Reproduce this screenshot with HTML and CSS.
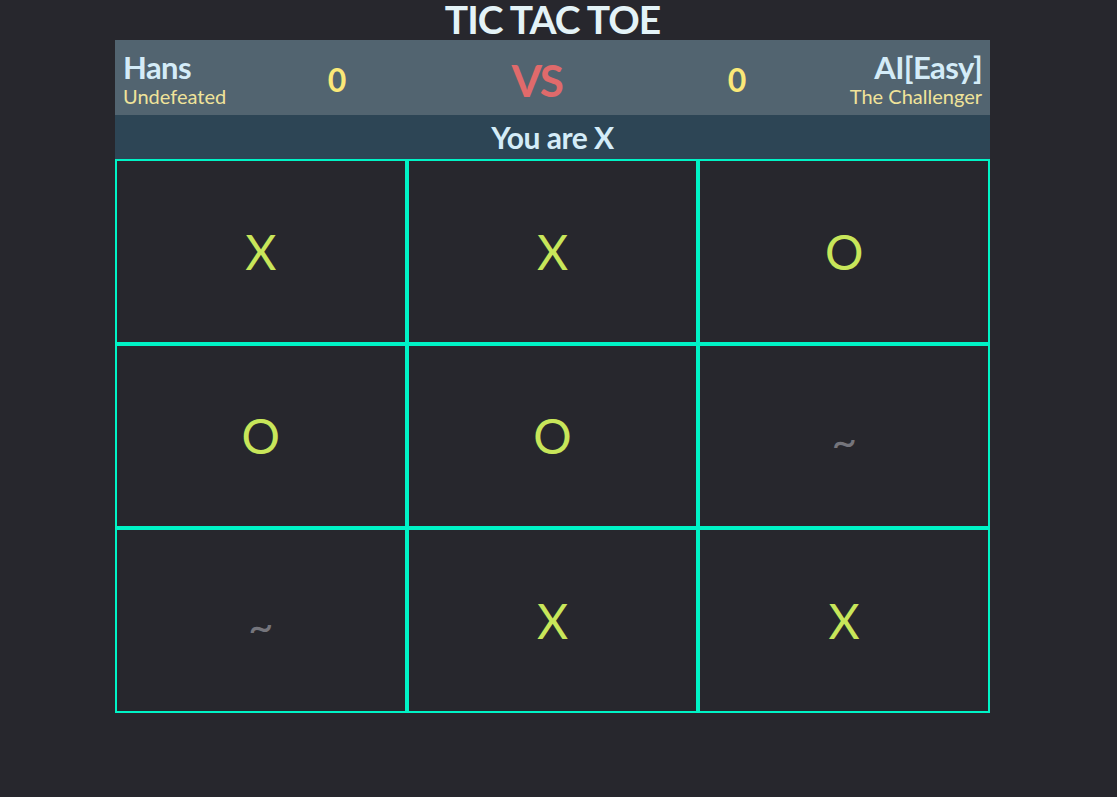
FILE: index.html
```html
<!DOCTYPE html>
<html>
<head>
<meta charset="utf-8">
<link rel="stylesheet" href="styles.css">
</head>
<body>
<main class="game">
  <h1 class="title">TIC TAC TOE</h1>
  <header class="scoreboard">
    <div class="player player-left">
      <div class="player-name">Hans</div>
      <div class="player-rank">Undefeated</div>
    </div>
    <div class="score">0</div>
    <div class="vs">VS</div>
    <div class="score">0</div>
    <div class="player player-right">
      <div class="player-name">AI[Easy]</div>
      <div class="player-rank">The Challenger</div>
    </div>
  </header>
  <div class="status">You are X</div>
  <section class="board">
    <div class="cell">X</div>
    <div class="cell">X</div>
    <div class="cell">O</div>
    <div class="cell">O</div>
    <div class="cell">O</div>
    <div class="cell empty">~</div>
    <div class="cell empty">~</div>
    <div class="cell">X</div>
    <div class="cell">X</div>
  </section>
</main>
</body>
</html>
```
FILE: styles.css
```css
html, body {
  margin: 0;
  padding: 0;
  background: #27272d;
}
body {
  font-family: Lato, "Open Sans", sans-serif;
  height: 797px;
}
.game {
  width: 875px;
  margin-left: 115px;
  display: flex;
  flex-direction: column;
}
.title {
  margin: 0;
  height: 40px;
  line-height: 38px;
  font-size: 39px;
  font-weight: 700;
  text-align: center;
  color: #e4f3f7;
  letter-spacing: -1px;
}
.scoreboard {
  height: 75px;
  box-sizing: border-box;
  background: #526470;
  padding: 0 8px;
  display: grid;
  grid-template-columns: 114px 200px 200px 200px 1fr;
  align-items: start;
}
.player {
  padding-top: 12px;
  display: flex;
  flex-direction: column;
}
.player-right {
  align-items: flex-end;
}
.player-name {
  font-size: 31px;
  line-height: 30px;
  font-weight: 700;
  color: #d4ecf8;
  letter-spacing: -0.6px;
}
.player-rank {
  font-size: 20px;
  line-height: 28px;
  color: #f0e39a;
}
.score, .vs {
  align-self: center;
  text-align: center;
  font-weight: 700;
  padding-top: 4px;
}
.score {
  font-size: 32px;
  color: #fbe878;
}
.vs {
  font-size: 44px;
  color: #e06a6b;
  letter-spacing: -1.5px;
}
.status {
  height: 44px;
  line-height: 44px;
  background: #2d4555;
  text-align: center;
  font-size: 30px;
  font-weight: 700;
  color: #d4ecf8;
  letter-spacing: -0.5px;
}
.board {
  display: grid;
  grid-template-columns: repeat(3, 1fr);
  grid-template-rows: repeat(3, 184.67px);
}
.cell {
  box-sizing: border-box;
  border: 2px solid #00f3c6;
  display: flex;
  align-items: center;
  justify-content: center;
  font-size: 48px;
  color: #c8e65a;
}
.cell.empty {
  font-size: 44px;
  color: #75757c;
  padding-top: 8px;
}
```
